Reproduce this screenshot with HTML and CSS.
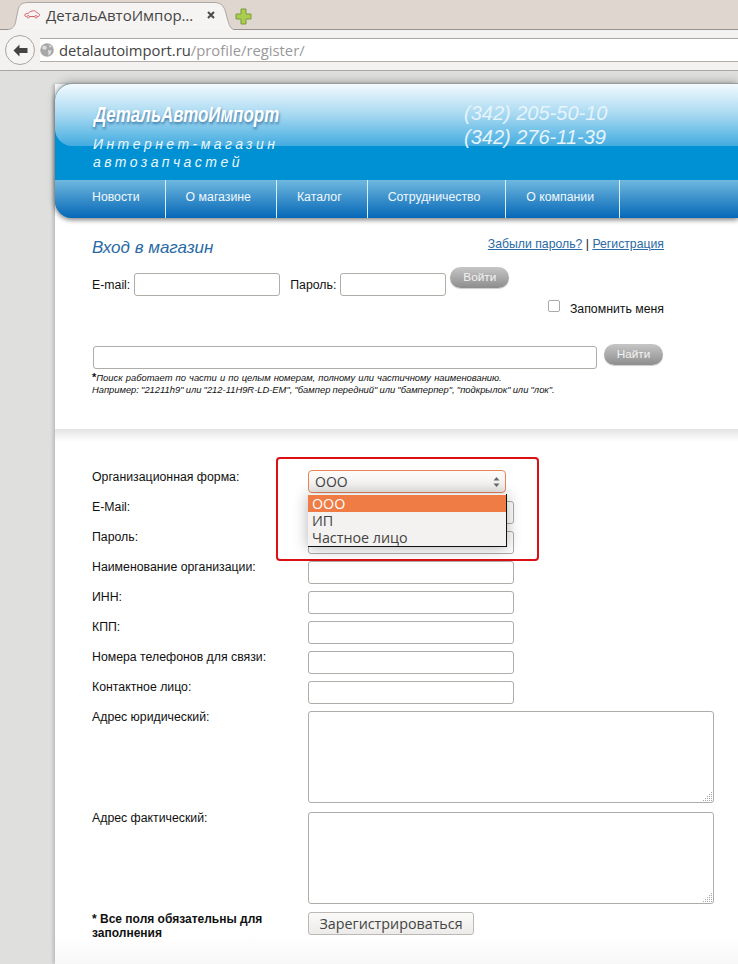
FILE: index.html
```html
<!DOCTYPE html>
<html lang="ru">
<head>
<meta charset="utf-8">
<title>ДетальАвтоИмпорт</title>
<link rel="stylesheet" href="styles.css">
</head>
<body>
<div class="tabstrip">
  <div class="tab">
    <svg class="tab-shape" width="226" height="30" viewBox="0 0 226 30"><path d="M0 29.500C5 29 7 26 8 20L10 10C11 5 14 2.500 20 2.500H206C212 2.500 215 5 217 10L220 21C221.500 26 223 29 226 29.500V30H0z" fill="#f6f4f2"/><path d="M0 29.500C5 29 7 26 8 20L10 10C11 5 14 2.500 20 2.500H206C212 2.500 215 5 217 10L220 21C221.500 26 223 29 226 29.500" fill="none" stroke="#aea6a2"/></svg>
    <svg class="tab-favicon" width="16" height="9" viewBox="0 0 16 9"><path d="M.7 5C.7 3.800 3 3.500 4.500 3.200 6 1.500 7.500.8 9.500.8c2 0 2.800 1 3.800 2.200 1.200.3 2.200.8 2.200 2 0 1.200-.8 1.500-1.500 1.500H2.500C1.300 6.500.7 6 .7 5z" fill="none" stroke="#d9606a"/><circle cx="4.200" cy="6.800" r="1.300" fill="#f6f4f2" stroke="#d9606a" stroke-width=".8"/><circle cx="12" cy="6.800" r="1.300" fill="#f6f4f2" stroke="#d9606a" stroke-width=".8"/></svg>
    <span class="tab-title">ДетальАвтоИмпор…</span>
    <svg class="tab-close" width="8" height="8" viewBox="0 0 8 8"><path d="M1 1l6 6M7 1L1 7" stroke="#4a4a4a" stroke-width="2"/></svg>
  </div>
  <svg class="newtab" width="17" height="17" viewBox="0 0 17 17"><path d="M6 1h5v5h5v5h-5v5H6v-5H1V6h5z" fill="#a9cd4e" stroke="#7d9a3a"/></svg>
</div>
<div class="toolbar">
  <div class="backbtn">
    <svg width="15" height="13" viewBox="0 0 15 13"><path d="M6.500 0.500L0.500 6.500l6 6V9h8V4h-8z" fill="#444"/></svg>
  </div>
  <div class="omnibox">
    <svg class="globe" width="14" height="14" viewBox="0 0 14 14"><circle cx="7" cy="7" r="6.800" fill="#a8a8a8"/><path d="M3 2.500l3 .5 1 2-2 2-3-1.500zM8 7l3.500 .5-1 3.500-2 1.500zM9 1.500l3 2.500-2.500 .5z" fill="#dcdcdc"/></svg>
    <span class="host">detalautoimport.ru</span><span class="path">/profile/register/</span>
  </div>
</div>
<div class="page">
  <div class="site">
    <header class="site-header">
      <div class="head-top">
        <div class="brand">
          <div class="logo">ДетальАвтоИмпорт</div>
          <div class="slogan">Интернет-магазин<br>автозапчастей</div>
        </div>
        <div class="phones">(342) 205-50-10<br>(342) 276-11-39</div>
      </div>
      <nav class="nav">
        <a class="nav-item nav-first">Новости</a>
        <a class="nav-item">О магазине</a>
        <a class="nav-item">Каталог</a>
        <a class="nav-item">Сотрудничество</a>
        <a class="nav-item">О компании</a>
      </nav>
    </header>

    <section class="login">
      <div class="login-head">
        <h2 class="login-title">Вход в магазин</h2>
        <div class="login-links"><a class="link">Забыли пароль?</a> | <a class="link">Регистрация</a></div>
      </div>
      <div class="login-row">
        <label class="login-label">E-mail:</label>
        <span class="input input-email"></span>
        <label class="login-label label-pass">Пароль:</label>
        <span class="input input-pass"></span>
        <span class="pill pill-login">Войти</span>
      </div>
      <div class="remember">
        <span class="checkbox"></span>
        <span class="remember-text">Запомнить меня</span>
      </div>
      <div class="search-row">
        <span class="input input-search"></span>
        <span class="pill pill-search">Найти</span>
      </div>
      <p class="hint"><span class="hint-first"><b class="hint-star">*</b>Поиск работает по части и по целым номерам, полному или частичному наименованию.</span><br><span class="hint-second">Например: "21211h9" или "212-11H9R-LD-EM", "бампер передний" или "бамперпер", "подкрылок" или "лок".</span></p>
    </section>

    <section class="register">
      <div class="form">
        <div class="row"><label class="row-label">Организационная форма:</label><span class="select">ООО<svg class="select-arrows" width="7" height="12" viewBox="0 0 7 12"><path d="M3.500 1L6.500 4.500H.5zM3.500 11L.5 7.500h6z" fill="#6a6a6a"/></svg></span></div>
        <div class="row"><label class="row-label">E-Mail:</label><span class="input input-form"></span></div>
        <div class="row"><label class="row-label">Пароль:</label><span class="input input-form"></span></div>
        <div class="row"><label class="row-label">Наименование организации:</label><span class="input input-form"></span></div>
        <div class="row"><label class="row-label">ИНН:</label><span class="input input-form"></span></div>
        <div class="row"><label class="row-label">КПП:</label><span class="input input-form"></span></div>
        <div class="row"><label class="row-label">Номера телефонов для связи:</label><span class="input input-form"></span></div>
        <div class="row"><label class="row-label">Контактное лицо:</label><span class="input input-form"></span></div>
        <div class="row row-area"><label class="row-label">Адрес юридический:</label><span class="textarea"><svg class="grip" width="11" height="11" viewBox="0 0 11 11"><path d="M9 1h1v1H9zM7 3h1v1H7zM9 3h1v1H9zM5 5h1v1H5zM7 5h1v1H7zM9 5h1v1H9zM3 7h1v1H3zM5 7h1v1H5zM7 7h1v1H7zM9 7h1v1H9zM1 9h1v1H1zM3 9h1v1H3zM5 9h1v1H5zM7 9h1v1H7zM9 9h1v1H9z" fill="#a8a8a8"/></svg></span></div>
        <div class="row row-area"><label class="row-label">Адрес фактический:</label><span class="textarea"><svg class="grip" width="11" height="11" viewBox="0 0 11 11"><path d="M9 1h1v1H9zM7 3h1v1H7zM9 3h1v1H9zM5 5h1v1H5zM7 5h1v1H7zM9 5h1v1H9zM3 7h1v1H3zM5 7h1v1H5zM7 7h1v1H7zM9 7h1v1H9zM1 9h1v1H1zM3 9h1v1H3zM5 9h1v1H5zM7 9h1v1H7zM9 9h1v1H9z" fill="#a8a8a8"/></svg></span></div>
        <div class="row row-submit"><label class="row-label required">* Все поля обязательны для заполнения</label><span class="submit">Зарегистрироваться</span></div>

        <div class="callout"></div>
        <ul class="dropdown">
          <li class="option option-active">ООО</li>
          <li class="option">ИП</li>
          <li class="option">Частное лицо</li>
        </ul>
      </div>
    </section>
  </div>
</div>
</body>
</html>
```
FILE: styles.css
```css
* { box-sizing: border-box; }
html, body { margin: 0; padding: 0; }
body {
  width: 738px;
  height: 964px;
  overflow: hidden;
  background: #dfdfde;
  font-family: "Liberation Sans", Arial, sans-serif;
  color: #111;
}

/* browser chrome */
.tabstrip {
  height: 30px;
  background: #dfd6d0;
  border-bottom: 1px solid #9a9290;
  display: flex;
  align-items: flex-start;
  padding-left: 8px;
}
.tab {
  position: relative;
  width: 226px;
  height: 30px;
  display: flex;
  align-items: center;
  padding: 0 0 1px 16px;
  flex: none;
}
.tab-shape { position: absolute; left: 0; top: 0; }
.tab-favicon { flex: none; position: relative; }
.tab-title {
  position: relative;
  margin-left: 6px;
  font: 15px "Open Sans", "Noto Sans", sans-serif;
  color: #444;
  white-space: nowrap;
  width: 148px;
}
.tab-close { position: relative; margin-left: 13px; flex: none; }
.newtab { margin: 8px 0 0 1px; flex: none; }
.toolbar {
  height: 41px;
  background: #f4f2f0;
  border-bottom: 1px solid #aaa6a3;
  padding: 8px 0 0 40px;
  position: relative;
}
.backbtn {
  position: absolute;
  left: 5px;
  top: 5px;
  width: 30px;
  height: 30px;
  border-radius: 50%;
  background: #f6f5f4;
  border: 1px solid #a8a4a2;
  display: flex;
  align-items: center;
  justify-content: center;
}
.omnibox {
  height: 24px;
  background: #fff;
  border-top: 1px solid #aaa6a3;
  border-bottom: 1px solid #b4aca8;
  display: flex;
  align-items: center;
  font: 14.800px "Open Sans", "Noto Sans", sans-serif;
  white-space: nowrap;
}
.globe { margin-right: 5px; flex: none; }
.host { color: #444; }
.path { color: #999; }

/* page */
.page {
  padding: 13px 0 0 55px;
  background: #dfdfde;
  height: 893px;
}
.site {
  background: #fff;
  height: 880px;
  box-shadow: -2px 0 3px rgba(0,0,0,.16);
}

.site-header {
  position: relative;
  height: 134px;
  background: #0090d4;
  border-radius: 17px 0 0 17px;
  box-shadow: 0 -1px 0 #9c9c9e, 0 -3px 9px rgba(0,0,0,.22), 0 2px 5px rgba(0,0,0,.45);
}
.head-top {
  height: 62px;
  background: linear-gradient(#f2fafe, #a6d8f1 50%, #43ace0);
  border-radius: 17px 0 0 17px;
  display: flex;
  padding-left: 38px;
}
.brand { width: 371px; }
.logo {
  margin: 18px 0 0 1px;
  font: italic bold 22px "Liberation Sans", sans-serif;
  color: #fff;
  text-shadow: 1px 2px 3px rgba(0,70,130,.6);
  white-space: nowrap;
  transform: scaleX(.77);
  transform-origin: left center;
}
.slogan {
  margin-top: 7px;
  font: italic 14px/18px "Liberation Sans", sans-serif;
  letter-spacing: 3.450px;
  color: #eaf7fd;
  white-space: nowrap;
}
.phones {
  margin-top: 17px;
  font: italic 20px/24px "Liberation Sans", sans-serif;
  color: #e6f4fb;
  white-space: nowrap;
}
.nav {
  position: absolute;
  left: 0;
  right: 0;
  bottom: 0;
  height: 38px;
  display: flex;
  background: linear-gradient(#6fb8e0, #3a8fca 50%, #0568b8);
  border-radius: 0 0 0 17px;
}
.nav-item {
  height: 38px;
  padding: 0 25px 0 20px;
  border-right: 1px solid #d8eef8;
  font-size: 12.300px;
  line-height: 35px;
  color: #f0f8fc;
  white-space: nowrap;
}
.nav-first { padding-left: 37px; }

/* login */
.login {
  height: 211px;
  padding: 0 74px 0 37px;
  background: #fff;
}
.login-head {
  display: flex;
  justify-content: space-between;
  padding-top: 20px;
  height: 49px;
}
.login-title {
  margin: 0;
  font: italic 17px/20px "Liberation Sans", sans-serif;
  color: #2a6aa5;
}
.login-links { font-size: 12.250px; line-height: 13px; color: #222; }
.link { color: #2a6aa5; text-decoration: underline; }
.login-row {
  display: flex;
  align-items: flex-start;
  height: 33px;
}
.login-label {
  font-size: 12.300px;
  line-height: 14px;
  margin: 11px 4px 0 0;
  white-space: nowrap;
}
.label-pass { margin-left: 10px; }
.input {
  display: block;
  background: #fff;
  border: 1px solid #b0aca8;
  border-radius: 3px;
  flex: none;
}
.input-email { width: 146px; height: 23px; margin-top: 6px; }
.input-pass { width: 106px; height: 23px; margin-top: 6px; }
.pill {
  display: block;
  flex: none;
  width: 59px;
  height: 21px;
  border-radius: 11px;
  background: linear-gradient(#c6c6c6, #8d8d8d);
  box-shadow: 0 1px 1px rgba(0,0,0,.2);
  color: #f2f2f2;
  font-size: 11.800px;
  line-height: 21px;
  text-align: center;
}
.pill-login { margin-left: 4px; }
.remember {
  display: flex;
  justify-content: flex-end;
  align-items: flex-start;
  height: 44px;
}
.checkbox {
  width: 12px;
  height: 12px;
  border: 1px solid #aaa;
  border-radius: 2px;
}
.remember-text {
  font-size: 12.300px;
  line-height: 14px;
  margin: 2px 0 0 10px;
}
.search-row {
  display: flex;
  align-items: flex-start;
  padding-left: 1px;
  height: 27px;
}
.input-search { width: 504px; height: 23px; margin-top: 2px; }
.pill-search { margin-left: 7px; }
.hint {
  margin: 0;
  font: italic 9.400px/12px "Liberation Sans", sans-serif;
  color: #111;
  white-space: nowrap;
}
.hint-first { word-spacing: .5px; }
.hint-second { word-spacing: -.45px; }
.hint-star { font-style: normal; font-size: 11px; }

/* registration */
.register {
  height: 535px;
  padding: 41px 0 0 37px;
  background:
    linear-gradient(#e4e4e4, #fff) top / 100% 13px no-repeat,
    linear-gradient(#fff, #fff 506px, #f7f7f7 535px);
}
.form { position: relative; }
.row {
  display: flex;
  align-items: flex-start;
  height: 30px;
}
.row-label {
  width: 216px;
  flex: none;
  font-size: 12.300px;
  line-height: 14px;
}
.input-form { width: 206px; height: 23px; margin-top: 1px; }
.select {
  width: 198px;
  height: 23px;
  display: flex;
  align-items: center;
  justify-content: space-between;
  padding: 0 5px 0 6px;
  border: 1px solid #e8845a;
  border-radius: 4px;
  background: linear-gradient(#fdfcfb, #eeecea);
  font: 14px "Open Sans", "Noto Sans", sans-serif;
  color: #444;
}
.row-area { height: 101px; }
.textarea {
  position: relative;
  display: block;
  width: 406px;
  height: 92px;
  margin-top: 1px;
  background: #fff;
  border: 1px solid #b0aca8;
  border-radius: 3px;
}
.grip { position: absolute; right: 0; bottom: 0; }
.row-submit { height: 40px; }
.required {
  width: 216px;
  padding-right: 30px;
  font-size: 12px;
  font-weight: bold;
  line-height: 14px;
}
.submit {
  width: 166px;
  height: 23px;
  border: 1px solid #bdb8b4;
  border-radius: 3px;
  background: linear-gradient(#fafaf9, #ecebe9);
  font: 14.300px/21px "Open Sans", "Noto Sans", sans-serif;
  color: #444;
  text-align: center;
}
.callout {
  position: absolute;
  left: 184px;
  top: -13px;
  width: 263px;
  height: 104px;
  border: 2px solid #dc0f14;
  border-radius: 4px;
  pointer-events: none;
}
.dropdown {
  position: absolute;
  left: 216px;
  top: 24px;
  width: 199px;
  margin: 0;
  padding: 1px 0 0;
  list-style: none;
  background: #f4f2f0;
  border-right: 1px solid #111;
  border-bottom: 1px solid #111;
  box-shadow: 0 1px 14px rgba(0,0,0,.3);
}
.option {
  height: 17px;
  padding-left: 4px;
  font: 14.300px/17px "Open Sans", "Noto Sans", sans-serif;
  color: #444;
}
.option-active { background: #ef7b45; color: #fff; }
```
